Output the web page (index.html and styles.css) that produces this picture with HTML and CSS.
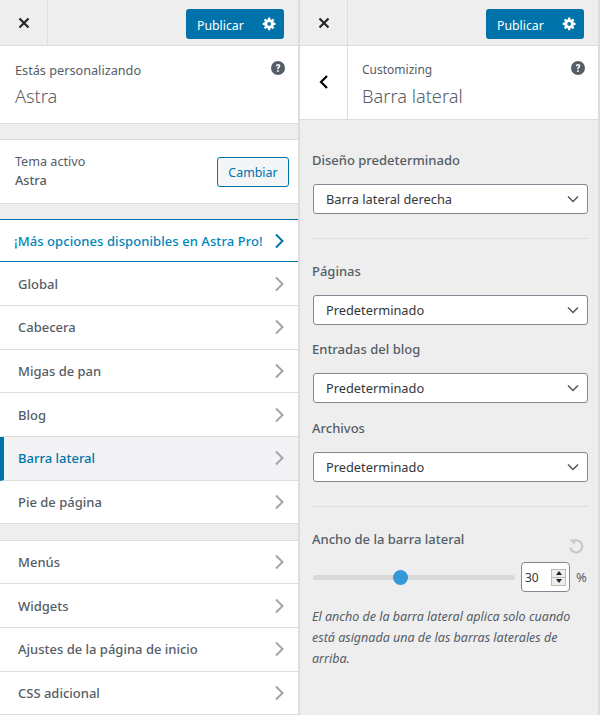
FILE: index.html
```html
<!DOCTYPE html>
<html lang="es">
<head>
<meta charset="utf-8">
<title>Personalizar</title>
<link rel="stylesheet" href="styles.css">
</head>
<body>
<div class="app">
  <section class="pane">
    <header class="topbar">
      <div class="close"><svg class="x" viewBox="0 0 12 12"><path d="M1.500 1.500l9 9M10.500 1.500l-9 9"/></svg></div>
      <div class="publish"><span>Publicar</span><svg class="gear" viewBox="0 0 20 20"><path d="M18 12h-2.180c-.17.7-.44 1.350-.81 1.930l1.540 1.540-2.100 2.100-1.540-1.540c-.58.360-1.230.640-1.910.810V19H8v-2.180c-.68-.170-1.330-.450-1.910-.810l-1.540 1.540-2.120-2.120 1.540-1.540c-.36-.58-.64-1.230-.81-1.910H1V9h2.170c.170-.680.440-1.330.810-1.910L2.440 5.550l2.100-2.100 1.540 1.540c.58-.37 1.230-.64 1.920-.81V2h3v2.180c.68.170 1.330.440 1.910.810l1.540-1.540 2.120 2.120-1.540 1.540c.360.580.640 1.230.810 1.910H18v3zM9.500 13a2.500 2.500 0 1 0 0-5 2.500 2.500 0 0 0 0 5z"/></svg></div>
    </header>
    <div class="info">
      <div class="info-line">Estás personalizando</div>
      <div class="info-title">Astra</div>
      <svg class="help" viewBox="0 0 16 16"><circle cx="8" cy="8" r="7"/><path class="q" d="M5.800 6.200c.1-1.400 1-2.100 2.300-2.100s2.200.7 2.200 1.800c0 1.500-1.600 1.600-1.600 3v.3H7.200v-.4c0-1.700 1.400-1.800 1.400-2.800 0-.4-.2-.7-.6-.7s-.6.3-.7.9H5.800zM7.200 10.300h1.500v1.600H7.200z"/></svg>
    </div>
    <div class="theme">
      <div class="theme-text">
        <div class="theme-label">Tema activo</div>
        <div class="theme-name">Astra</div>
      </div>
      <div class="change">Cambiar</div>
    </div>
    <a class="pro">¡Más opciones disponibles en Astra Pro!<svg class="chev" viewBox="0 0 10 16"><path d="M2 1.500L8.500 8 2 14.500"/></svg></a>
    <ul class="menu">
      <li class="row">Global<svg class="chev" viewBox="0 0 10 16"><path d="M2 1.500L8.500 8 2 14.500"/></svg></li>
      <li class="row">Cabecera<svg class="chev" viewBox="0 0 10 16"><path d="M2 1.500L8.500 8 2 14.500"/></svg></li>
      <li class="row">Migas de pan<svg class="chev" viewBox="0 0 10 16"><path d="M2 1.500L8.500 8 2 14.500"/></svg></li>
      <li class="row">Blog<svg class="chev" viewBox="0 0 10 16"><path d="M2 1.500L8.500 8 2 14.500"/></svg></li>
      <li class="row active">Barra lateral<svg class="chev" viewBox="0 0 10 16"><path d="M2 1.500L8.500 8 2 14.500"/></svg></li>
      <li class="row">Pie de página<svg class="chev" viewBox="0 0 10 16"><path d="M2 1.500L8.500 8 2 14.500"/></svg></li>
    </ul>
    <ul class="menu second">
      <li class="row">Menús<svg class="chev" viewBox="0 0 10 16"><path d="M2 1.500L8.500 8 2 14.500"/></svg></li>
      <li class="row">Widgets<svg class="chev" viewBox="0 0 10 16"><path d="M2 1.500L8.500 8 2 14.500"/></svg></li>
      <li class="row">Ajustes de la página de inicio<svg class="chev" viewBox="0 0 10 16"><path d="M2 1.500L8.500 8 2 14.500"/></svg></li>
      <li class="row">CSS adicional<svg class="chev" viewBox="0 0 10 16"><path d="M2 1.500L8.500 8 2 14.500"/></svg></li>
    </ul>
  </section>

  <section class="pane">
    <header class="topbar">
      <div class="close"><svg class="x" viewBox="0 0 12 12"><path d="M1.500 1.500l9 9M10.500 1.500l-9 9"/></svg></div>
      <div class="publish"><span>Publicar</span><svg class="gear" viewBox="0 0 20 20"><path d="M18 12h-2.180c-.17.7-.44 1.350-.81 1.930l1.540 1.540-2.100 2.100-1.540-1.540c-.58.360-1.230.640-1.910.810V19H8v-2.180c-.68-.170-1.330-.450-1.910-.810l-1.540 1.540-2.120-2.120 1.540-1.540c-.36-.58-.64-1.230-.81-1.910H1V9h2.170c.170-.680.440-1.330.810-1.910L2.440 5.550l2.100-2.100 1.540 1.540c.58-.37 1.230-.64 1.920-.81V2h3v2.180c.68.170 1.330.440 1.910.810l1.540-1.540 2.120 2.120-1.540 1.540c.360.580.640 1.230.810 1.910H18v3zM9.500 13a2.500 2.500 0 1 0 0-5 2.500 2.500 0 0 0 0 5z"/></svg></div>
    </header>
    <div class="sechead">
      <div class="back"><svg class="backicon" viewBox="0 0 10 16"><path d="M8 2L2 8l6 6"/></svg></div>
      <div class="sectitle">
        <div class="sec-line">Customizing</div>
        <div class="info-title">Barra lateral</div>
      </div>
      <svg class="help" viewBox="0 0 16 16"><circle cx="8" cy="8" r="7"/><path class="q" d="M5.800 6.200c.1-1.400 1-2.100 2.300-2.100s2.200.7 2.200 1.800c0 1.500-1.600 1.600-1.600 3v.3H7.200v-.4c0-1.700 1.400-1.800 1.400-2.800 0-.4-.2-.7-.6-.7s-.6.300-.7.900H5.800zM7.200 10.300h1.500v1.600H7.200z"/></svg>
    </div>
    <div class="controls">
      <div class="label first">Diseño predeterminado</div>
      <div class="select">Barra lateral derecha<svg class="caret" viewBox="0 0 12 8"><path d="M1 1.500l5 5 5-5"/></svg></div>
      <div class="rule"></div>
      <div class="label sub">Páginas</div>
      <div class="select">Predeterminado<svg class="caret" viewBox="0 0 12 8"><path d="M1 1.500l5 5 5-5"/></svg></div>
      <div class="label sub2">Entradas del blog</div>
      <div class="select">Predeterminado<svg class="caret" viewBox="0 0 12 8"><path d="M1 1.500l5 5 5-5"/></svg></div>
      <div class="label sub3">Archivos</div>
      <div class="select">Predeterminado<svg class="caret" viewBox="0 0 12 8"><path d="M1 1.500l5 5 5-5"/></svg></div>
      <div class="rule"></div>
      <div class="range-head">
        <div class="label">Ancho de la barra lateral</div>
        <svg class="reset" viewBox="0 0 16 16"><path d="M4.600 3.600A6 6 0 1 1 2.300 9.500"/><path class="fillp" d="M1.500 1.500h5.300v5.300z"/></svg>
      </div>
      <div class="range">
        <div class="track"><span class="thumb"></span></div>
        <div class="num"><span>30</span><div class="spin"><i class="up"></i><i class="down"></i></div></div>
        <span class="unit">%</span>
      </div>
      <p class="desc">El ancho de la barra lateral aplica solo cuando está asignada una de las barras laterales de arriba.</p>
    </div>
  </section>
</div>
</body>
</html>
```

FILE: styles.css
```css
* { box-sizing: border-box; }
html, body { margin: 0; padding: 0; height: 100%; overflow: hidden; }
body { font-family: "Noto Sans", "Open Sans", sans-serif; font-size: 13px; color: #555d66; background: #eee; }
.app { display: flex; width: 600px; height: 715px; }
.pane { position: relative; width: 300px; height: 715px; background: #eee; border-right: 2px solid #ddd; overflow: hidden; flex: none; }
.topbar { display: flex; justify-content: space-between; height: 46px; border-bottom: 1px solid #ddd; padding-right: 14px; width: 298px; }
.close { width: 48px; height: 45px; border-right: 1px solid #ddd; display: flex; align-items: center; justify-content: center; }
.x { width: 12px; height: 12px; fill: none; stroke: #23282d; stroke-width: 2.200; }
.publish { width: 98px; height: 30px; margin-top: 9px; background: #0073aa; border-radius: 3px; color: #fff; font-size: 12.300px; display: flex; align-items: center; padding: 2px 7px 0 11px; justify-content: space-between; }
.gear { width: 15px; height: 15px; fill: #fff; margin-bottom: 3px; }
.info { position: relative; height: 78px; background: #fff; border-bottom: 1px solid #ddd; padding: 14px 15px 0; }
.info-line { line-height: 20px; font-size: 12.700px; }
.info-title { font-size: 18.200px; font-weight: 300; line-height: 26px; margin-top: 3px; color: #555d66; }
.help { position: absolute; right: 12px; top: 14px; width: 16px; height: 16px; fill: #555d66; }
.q { fill: #fff; }
.theme { display: flex; align-items: center; justify-content: space-between; height: 65px; margin-top: 15px; background: #fff; border-top: 1px solid #ddd; border-bottom: 1px solid #ddd; padding: 0 9px 0 15px; }
.theme-text { padding-bottom: 2px; }
.theme-label { line-height: 19px; font-size: 12.600px; }
.theme-name { line-height: 19px; font-weight: 500; font-size: 12.700px; }
.change { width: 72px; height: 30px; border: 1px solid #0073aa; border-radius: 3px; background: #f3f5f6; color: #0073aa; font-size: 12.400px; padding-top: 1px; display: flex; align-items: center; justify-content: center; }
.pro { display: flex; align-items: center; justify-content: space-between; height: 43.340px; margin-top: 15px; background: #fff; border-top: 1px solid #0073aa; border-bottom: 1px solid #0073aa; padding: 0 14px 0 14px; color: #0085ba; font-weight: 500; letter-spacing: .08px; }
.chev { width: 10px; height: 16px; fill: none; stroke: #a0a5aa; stroke-width: 2; }
.pro .chev { stroke: #0073aa; }
.menu { list-style: none; margin: 0; padding: 0; background: #fff; }
.menu.second { margin-top: 15.500px; border-top: 1px solid #ddd; }
.row { display: flex; align-items: center; justify-content: space-between; height: 43.670px; padding: 0 14px 0 18px; border-bottom: 1px solid #ddd; font-weight: 500; background: #fff; }
.row.active { background: #f3f3f5; color: #0073aa; border-left: 4px solid #0073aa; padding-left: 14px; }
.sechead { position: relative; display: flex; height: 74px; background: #fff; border-bottom: 1px solid #ddd; }
.back { width: 48px; border-right: 1px solid #ddd; padding-bottom: 2px; display: flex; align-items: center; justify-content: center; }
.backicon { width: 10px; height: 16px; fill: none; stroke: #000; stroke-width: 2.200; }
.sectitle { padding: 14px 0 0 14px; }
.sec-line { line-height: 20px; font-size: 12px; }
.controls { padding: 0 10px 0 12px; }
.label { font-size: 13px; font-weight: 500; line-height: 20px; color: #555d66; }
.label.first { margin-top: 30px; }
.label.sub { margin-top: 22px; }
.label.sub2 { margin-top: 14px; }
.label.sub3 { margin-top: 15px; }
.select { display: flex; align-items: center; justify-content: space-between; height: 30px; width: 275px; margin: 14px 0 0 1px; padding: 0 8px 0 12px; background: #fff; border: 1px solid #7e8993; border-radius: 3px; color: #32373c; font-size: 12.800px; }
.caret { width: 12px; height: 8px; fill: none; stroke: #555; stroke-width: 1.500; }
.rule { height: 1px; width: 276px; background: #ddd; margin-top: 24px; }
.range-head { display: flex; justify-content: space-between; margin-top: 22px; padding-right: 4px; }
.reset { width: 16px; height: 16px; margin-top: 9px; fill: none; stroke: #c8c8c8; stroke-width: 2.200; }
.fillp { fill: #c8c8c8; stroke: none; }
.range { display: flex; align-items: center; margin-top: 8px; padding-left: 1px; }
.track { position: relative; width: 202px; height: 5px; background: #d8d8d8; border-radius: 3px; }
.thumb { position: absolute; left: 80px; top: -5px; width: 15px; height: 15px; border-radius: 50%; background: #3498db; }
.num { display: flex; align-items: center; justify-content: space-between; width: 49px; height: 30px; margin-left: 6px; padding: 0 1px 0 3px; background: #fff; border: 1px solid #7e8993; border-radius: 4px; color: #32373c; font-size: 12px; }
.spin { display: flex; flex-direction: column; width: 15px; height: 17px; background: #eee; border: 1px solid #bbb; margin-right: 2px; }
.spin i { flex: 1; display: flex; align-items: center; justify-content: center; }
.up::before { content: ""; border: 3px solid transparent; border-top: 0; border-bottom: 4px solid #222; }
.down { border-top: 1px solid #bbb; }
.down::before { content: ""; border: 3px solid transparent; border-bottom: 0; border-top: 4px solid #222; }
.unit { margin-left: 6px; }
.desc { margin: 14px 0 0; font-style: italic; font-size: 12.500px; line-height: 21px; color: #555d66; width: 270px; }
```
